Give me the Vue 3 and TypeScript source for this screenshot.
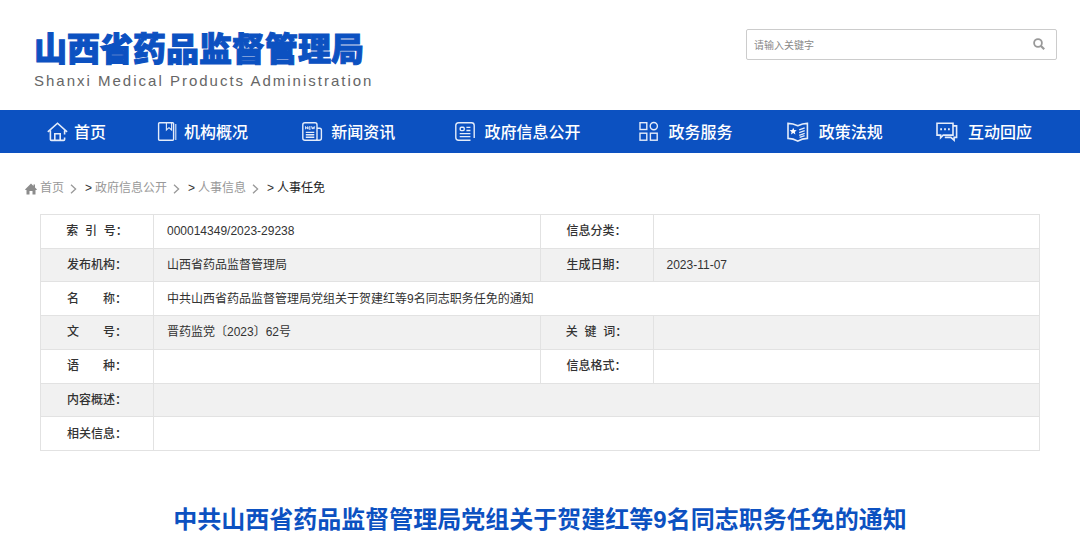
<script setup lang="ts">
import { ref } from 'vue'

interface NavItem {
  icon: string
  label: string
}

interface Cell {
  label: string
  value: string
}

const keyword = ref('')

const navItems: NavItem[] = [
  { icon: 'home', label: '首页' },
  { icon: 'book', label: '机构概况' },
  { icon: 'news', label: '新闻资讯' },
  { icon: 'info', label: '政府信息公开' },
  { icon: 'grid', label: '政务服务' },
  { icon: 'law', label: '政策法规' },
  { icon: 'chat', label: '互动回应' },
]

const crumbs: string[] = ['首页', '政府信息公开', '人事信息']

const rows: Cell[][] = [
  [
    { label: '索\u00a0\u00a0引\u00a0\u00a0号：', value: '000014349/2023-29238' },
    { label: '信息分类：', value: '' },
  ],
  [
    { label: '发布机构：', value: '山西省药品监督管理局' },
    { label: '生成日期：', value: '2023-11-07' },
  ],
  [{ label: '名　　称：', value: '中共山西省药品监督管理局党组关于贺建红等9名同志职务任免的通知' }],
  [
    { label: '文　　号：', value: '晋药监党〔2023〕62号' },
    { label: '关\u00a0\u00a0键\u00a0\u00a0词：', value: '' },
  ],
  [
    { label: '语　　种：', value: '' },
    { label: '信息格式：', value: '' },
  ],
  [{ label: '内容概述：', value: '' }],
  [{ label: '相关信息：', value: '' }],
]
</script>

<template>
  <div class="page">
    <header class="header">
      <div class="brand">
        <div class="brand-cn">山西省药品监督管理局</div>
        <div class="brand-en">Shanxi Medical Products Administration</div>
      </div>
      <form class="search" @submit.prevent>
        <input v-model="keyword" type="text" placeholder="请输入关键字" aria-label="请输入关键字" />
        <button type="submit" aria-label="搜索">
          <svg width="12" height="12" viewBox="0 0 12 12" fill="none" stroke="#999">
            <circle cx="5" cy="5" r="3.9" stroke-width="1.8" />
            <path d="M8 8l3.2 3.2" stroke-width="2.2" />
          </svg>
        </button>
      </form>
    </header>

    <nav class="nav">
      <a v-for="item in navItems" :key="item.icon" href="#" :class="['nav-item', item.icon]">
        <svg width="22" height="22" viewBox="0 0 22 22" fill="none" stroke="#e4ecfa" stroke-width="1.4">
          <template v-if="item.icon === 'home'">
            <path d="M.8 10.800L10.500 2.200l9.600 8.600M3.400 9.400v9c0 .6.400 1 1 1h12.200c.6 0 1-.4 1-1v-1.800M17.600 9.400v4.200" stroke-width="1.600" />
            <path d="M7.800 19.200v-6.400h5.400v6.400" stroke-width="1.600" />
          </template>
          <template v-else-if="item.icon === 'book'">
            <path d="M2.800 1.700h12.800q1 0 1 1v15.600q0 1-1 1H2.600q-1 0-1-1V2.700q0-1 1-1z" />
            <path d="M9.400 2v7l2.600-2.300 2.600 2.300V2M18.800 3v16" stroke-width="1.100" />
          </template>
          <template v-else-if="item.icon === 'news'">
            <path d="M4 1.700h10q2 0 2 2v15.600H4q-2.200 0-2.200-2V3.700q0-2 2.200-2z" />
            <path d="M16 7.200h2.600q1.800 0 1.800 1.800v8.300q0 2-2.200 2H15" />
            <path d="M4.800 11.400h8.500M4.800 13.800h8.500M4.800 16.200h8.500" />
            <path d="M4.500 8.300V5.500l2 2.600V5.400M9.600 5.800H7.900v2.400h1.700M7.900 7h1.600M10.500 5.300l.8 2.800.8-2.300.8 2.300.8-2.800" stroke-width=".9" />
          </template>
          <template v-else-if="item.icon === 'info'">
            <path d="M16.500 19.300h-12q-2.700 0-2.700-2.700V4.500q0-2.700 2.700-2.700h13q2.700 0 2.700 2.700v12.600" />
            <rect x="6.200" y="6.300" width="4" height="3.300" rx="1" />
            <path d="M12.400 6.400h4M12.400 9.500h4M5.700 12.600h10.700M5.700 15.600h10.700" />
          </template>
          <template v-else-if="item.icon === 'grid'">
            <rect x="1" y="1.700" width="6.800" height="6.800" />
            <circle cx="14.800" cy="5.100" r="3.600" />
            <rect x="1" y="12.200" width="6.800" height="7" />
            <rect x="11.400" y="12.200" width="6.800" height="7" />
          </template>
          <template v-else-if="item.icon === 'law'">
            <path d="M1 2.400q5 .1 9.800 2.300Q15.500 2.500 20.400 2.400v15q-5.400.1-9.600 2.700Q6.400 17.500 1 17.400z" stroke-width="1.600" />
            <path d="M6.200 6.800l1 2.300 2.500.2-1.900 1.600.6 2.500-2.200-1.400L4 13.400l.6-2.500-1.900-1.600 2.500-.2z" fill="#fff" stroke="none" />
            <path d="M12.200 8.800l5.500-2M12.200 11.600l5.500-2M12.200 14.400l5.500-2M12.600 16.400l5-1.800" />
          </template>
          <template v-else>
            <path d="M1 2.300h16v11.800H7.200l-2.600 2.600v-2.600H1z" stroke-width="1.600" />
            <path d="M17 4.900h3.600v11.500h-2.500v2.900l-3.200-2.900H8.800" stroke-width="1.600" />
            <path d="M4.200 8.300H6M8.100 8.300h1.800M12 8.300h1.800" stroke-width="2" />
          </template>
        </svg>
        <span>{{ item.label }}</span>
      </a>
    </nav>

    <div class="crumbs">
      <svg class="crumb-home" width="12" height="12" viewBox="0 0 12 12" fill="#8c8c8c">
        <path d="M6 .5l2.500 2.400V1.500h1.500v2.900l2 2-.6.700H10.500v4.400h-3V8h-3v3.500h-3V7.100H.6L0 6.400z" />
      </svg>
      <template v-for="crumb in crumbs" :key="crumb">
        <a href="#">{{ crumb }}</a>
        <svg class="chevron" width="7" height="10" viewBox="0 0 7 10" fill="none" stroke="#999" stroke-width="1.300">
          <path d="M1 .7L5.600 5 1 9.300" />
        </svg>
        <span class="sep">&gt;</span>
      </template>
      <span class="current">人事任免</span>
    </div>

    <main class="content">
      <table class="meta">
        <colgroup>
          <col class="col-label" />
          <col />
          <col class="col-label" />
          <col />
        </colgroup>
        <tbody>
          <tr v-for="(row, r) in rows" :key="r">
            <template v-for="cell in row" :key="cell.label">
              <th scope="row">{{ cell.label }}</th>
              <td :colspan="row.length === 1 ? 3 : 1">{{ cell.value }}</td>
            </template>
          </tr>
        </tbody>
      </table>
      <h1>中共山西省药品监督管理局党组关于贺建红等9名同志职务任免的通知</h1>
    </main>
  </div>
</template>

<style>
body {
  background: #fff;
}
</style>

<style scoped>
.page {
  font-family: "Liberation Sans", "Noto Sans CJK SC", sans-serif;
  font-size: 12px;
  color: #333;
}
a {
  text-decoration: none;
}
svg {
  display: block;
  flex: none;
}
.header {
  display: flex;
  justify-content: space-between;
  align-items: flex-start;
  height: 110px;
  padding: 29px 23px 0 34px;
  box-sizing: border-box;
}
.brand-cn {
  padding-top: 1px;
  font-size: 33px;
  line-height: 40px;
  font-weight: 900;
  color: #0c51c1;
  -webkit-text-stroke: 1px #0c51c1;
  white-space: nowrap;
}
.brand-en {
  margin-top: 1px;
  font-size: 15px;
  line-height: 20px;
  letter-spacing: 2px;
  color: #666;
  white-space: nowrap;
}
.search {
  display: flex;
  width: 311px;
  height: 31px;
  box-sizing: border-box;
  border: 1px solid #ccc;
  border-radius: 2px;
}
.search input {
  flex: 1;
  min-width: 0;
  padding: 1px 7px 0;
  border: 0;
  outline: 0;
  background: none;
  font: 10px "Liberation Sans", "Noto Sans CJK SC", sans-serif;
  color: #333;
}
.search input::placeholder {
  color: #888;
  opacity: 1;
}
.search button {
  display: flex;
  align-items: center;
  padding: 0 11px 2px;
  border: 0;
  background: none;
}
.nav {
  display: grid;
  grid-template-columns: 110fr 144fr 153fr 184fr 148fr 149fr 97fr;
  height: 43px;
  padding: 0 47px;
  background: #0c51c1;
}
.nav-item {
  display: flex;
  align-items: center;
  gap: 8px;
  font-size: 16px;
  font-weight: 500;
  color: #fff;
  white-space: nowrap;
}
.nav-item span {
  padding-bottom: 2px;
}
.nav-item.home,
.nav-item.book {
  gap: 5px;
}
.nav-item.law,
.nav-item.chat {
  gap: 10px;
}
.crumbs {
  display: flex;
  align-items: center;
  height: 21px;
  padding: 25px 25px 15px;
  line-height: 21px;
}
.crumb-home {
  margin-right: 3px;
}
.crumbs a {
  color: #999;
}
.chevron {
  margin: 0 8px 0 6px;
}
.sep {
  margin-right: 3px;
}
.current {
  color: #222;
}
.content {
  padding: 0 40px;
}
.meta {
  width: 100%;
  height: 237px;
  table-layout: fixed;
  border-collapse: collapse;
}
.col-label {
  width: 113px;
}
.meta th,
.meta td {
  padding: 0;
  border: 1px solid #e2e2e2;
  line-height: 18px;
}
.meta th {
  font-weight: 500;
  text-align: center;
}
.meta td {
  padding: 0 13px;
}
.meta tr:nth-child(even) {
  background: #f1f1f1;
}
h1 {
  margin: 51px 0 0;
  font-size: 24px;
  line-height: 36px;
  font-weight: 700;
  text-align: center;
  color: #0c51c1;
}
</style>
